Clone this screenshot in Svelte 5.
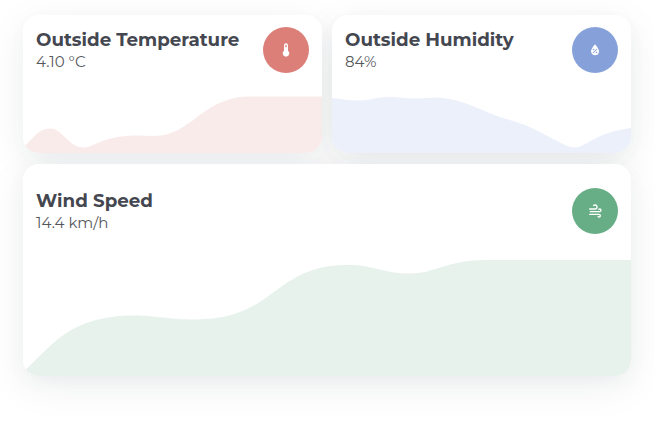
<script>
  const cards = [
    {
      title: 'Outside Temperature', value: '4.10 °C', color: '#dc7f79', fill: '#faebeb', kind: 'temp', width: 299, height: 138,
      area: 'M0 133C9 125 15 113.5 27 113.5C40 113.5 45 132.5 61 132.5C70 132.5 80 121 112 120.5C128 120.5 138 123 154 115.5C174 106 190 81.5 227 81.5H299V138H0Z',
      icon: 'M15 13V5A3 3 0 0 0 9 5V13A5 5 0 1 0 15 13M12 4A1 1 0 0 1 13 5V8H11V5A1 1 0 0 1 12 4Z'
    },
    {
      title: 'Outside Humidity', value: '84%', color: '#86a1da', fill: '#ebf0fa', kind: 'humidity', width: 299, height: 138,
      area: 'M0 83C9 84 16 85.5 27 85.5C38 85.5 44 82 57 82C69 82 73 83.5 84 83.5C94 83.5 101 82.5 110 83C130 84 152 97 174 104C194 109 204 115 221 124C230 128 235 132.5 243 132.5C254 132.5 264 117 299 113V138H0Z',
      icon: 'M12 3.25C12 3.25 6 10 6 14C6 17.32 8.69 20 12 20A6 6 0 0 0 18 14C18 10 12 3.25 12 3.25M14.47 9.97L15.53 11.03L9.53 17.03L8.47 15.97M9.75 10A1.25 1.25 0 0 1 11 11.25A1.25 1.25 0 0 1 9.75 12.5A1.25 1.25 0 0 1 8.5 11.25A1.25 1.25 0 0 1 9.75 10M14.25 14.5A1.25 1.25 0 0 1 15.5 15.75A1.25 1.25 0 0 1 14.25 17A1.25 1.25 0 0 1 13 15.75A1.25 1.25 0 0 1 14.25 14.5Z'
    },
    {
      title: 'Wind Speed', value: '14.4 km/h', color: '#67ad86', fill: '#e8f2ed', kind: 'wind', width: 608, height: 212,
      area: 'M0 208C28 184 44 151.5 112 151.5C132 151.5 145 155.5 172 155.5C254 155.5 249 101 325 101C352 101 359 109.5 387 109.5C412 109.5 424 96 463 96H608V212H0Z',
      icon: 'M4 10A1 1 0 0 1 3 9A1 1 0 0 1 4 8H12A2 2 0 0 0 14 6A2 2 0 0 0 12 4C11.45 4 10.95 4.22 10.59 4.59C10.2 5 9.56 5 9.17 4.59C8.78 4.2 8.78 3.56 9.17 3.17C9.9 2.45 10.9 2 12 2A4 4 0 0 1 16 6A4 4 0 0 1 12 10H4M19 12A1 1 0 0 0 20 11A1 1 0 0 0 19 10C18.72 10 18.47 10.11 18.29 10.29C17.9 10.68 17.27 10.68 16.88 10.29C16.5 9.9 16.5 9.27 16.88 8.88C17.42 8.34 18.17 8 19 8A3 3 0 0 1 22 11A3 3 0 0 1 19 14H5A1 1 0 0 1 4 13A1 1 0 0 1 5 12H19M18 18H4A1 1 0 0 1 3 17A1 1 0 0 1 4 16H18A3 3 0 0 1 21 19A3 3 0 0 1 18 22C17.17 22 16.42 21.66 15.88 21.12C15.5 20.73 15.5 20.1 15.88 19.71C16.27 19.32 16.9 19.32 17.29 19.71C17.47 19.89 17.72 20 18 20A1 1 0 0 0 19 19A1 1 0 0 0 18 18Z'
    }
  ];
</script>

<main>
  {#each cards as card}
    <section class="card {card.kind}">
      <svg class="graph" viewBox="0 0 {card.width} {card.height}" preserveAspectRatio="none" aria-hidden="true">
        <path d={card.area} fill={card.fill} />
      </svg>
      <header>
        <div class="labels">
          <div class="title">{card.title}</div>
          <div class="value">{card.value}</div>
        </div>
        <div class="badge" style:background={card.color}>
          <svg width="16" height="16" viewBox="0 0 24 24" aria-hidden="true"><path d={card.icon} fill="#fff" /></svg>
        </div>
      </header>
    </section>
  {/each}
</main>

<style>
  :global(body) { background: #fff; overflow: hidden; }
  main {
    box-sizing: border-box;
    isolation: isolate;
    width: 654px;
    height: 437px;
    padding: 15px 23px 61px;
    display: grid;
    grid-template-columns: 299px 299px;
    grid-template-rows: 138px 212px;
    column-gap: 10px;
    row-gap: 11px;
    font-family: Montserrat, Inter, "Open Sans", sans-serif;
  }
  .card {
    position: relative;
    box-sizing: border-box;
    padding: 12px 13px;
    border-radius: 16px;
    background: #fff;
  }
  .card::before {
    content: "";
    position: absolute;
    inset: 0;
    z-index: -1;
    border-radius: 16px;
    box-shadow: 0 10px 40px rgba(20, 40, 50, 0.07), 0 5px 20px rgba(15, 20, 50, 0.025);
  }
  .humidity { box-shadow: 0 8px 30px rgba(20, 30, 40, 0.02); }
  .wind { grid-column: 1 / 3; padding-top: 24px; }
  .wind::before { box-shadow: 0 10px 40px rgba(20, 40, 50, 0.07), 0 5px 20px rgba(15, 20, 50, 0.035); }
  .graph {
    position: absolute;
    inset: 0;
    width: 100%;
    height: 100%;
    border-radius: 16px;
  }
  header {
    position: relative;
    display: flex;
    justify-content: space-between;
  }
  .labels { padding: 1px 0 0; white-space: nowrap; }
  .title { font-size: 18.24px; line-height: 24px; font-weight: 700; color: #44474f; }
  .value { font-size: 15px; line-height: 20px; font-weight: 400; color: #55575c; }
  .badge {
    width: 46px;
    height: 46px;
    border-radius: 50%;
    display: flex;
    align-items: center;
    justify-content: center;
  }
</style>
